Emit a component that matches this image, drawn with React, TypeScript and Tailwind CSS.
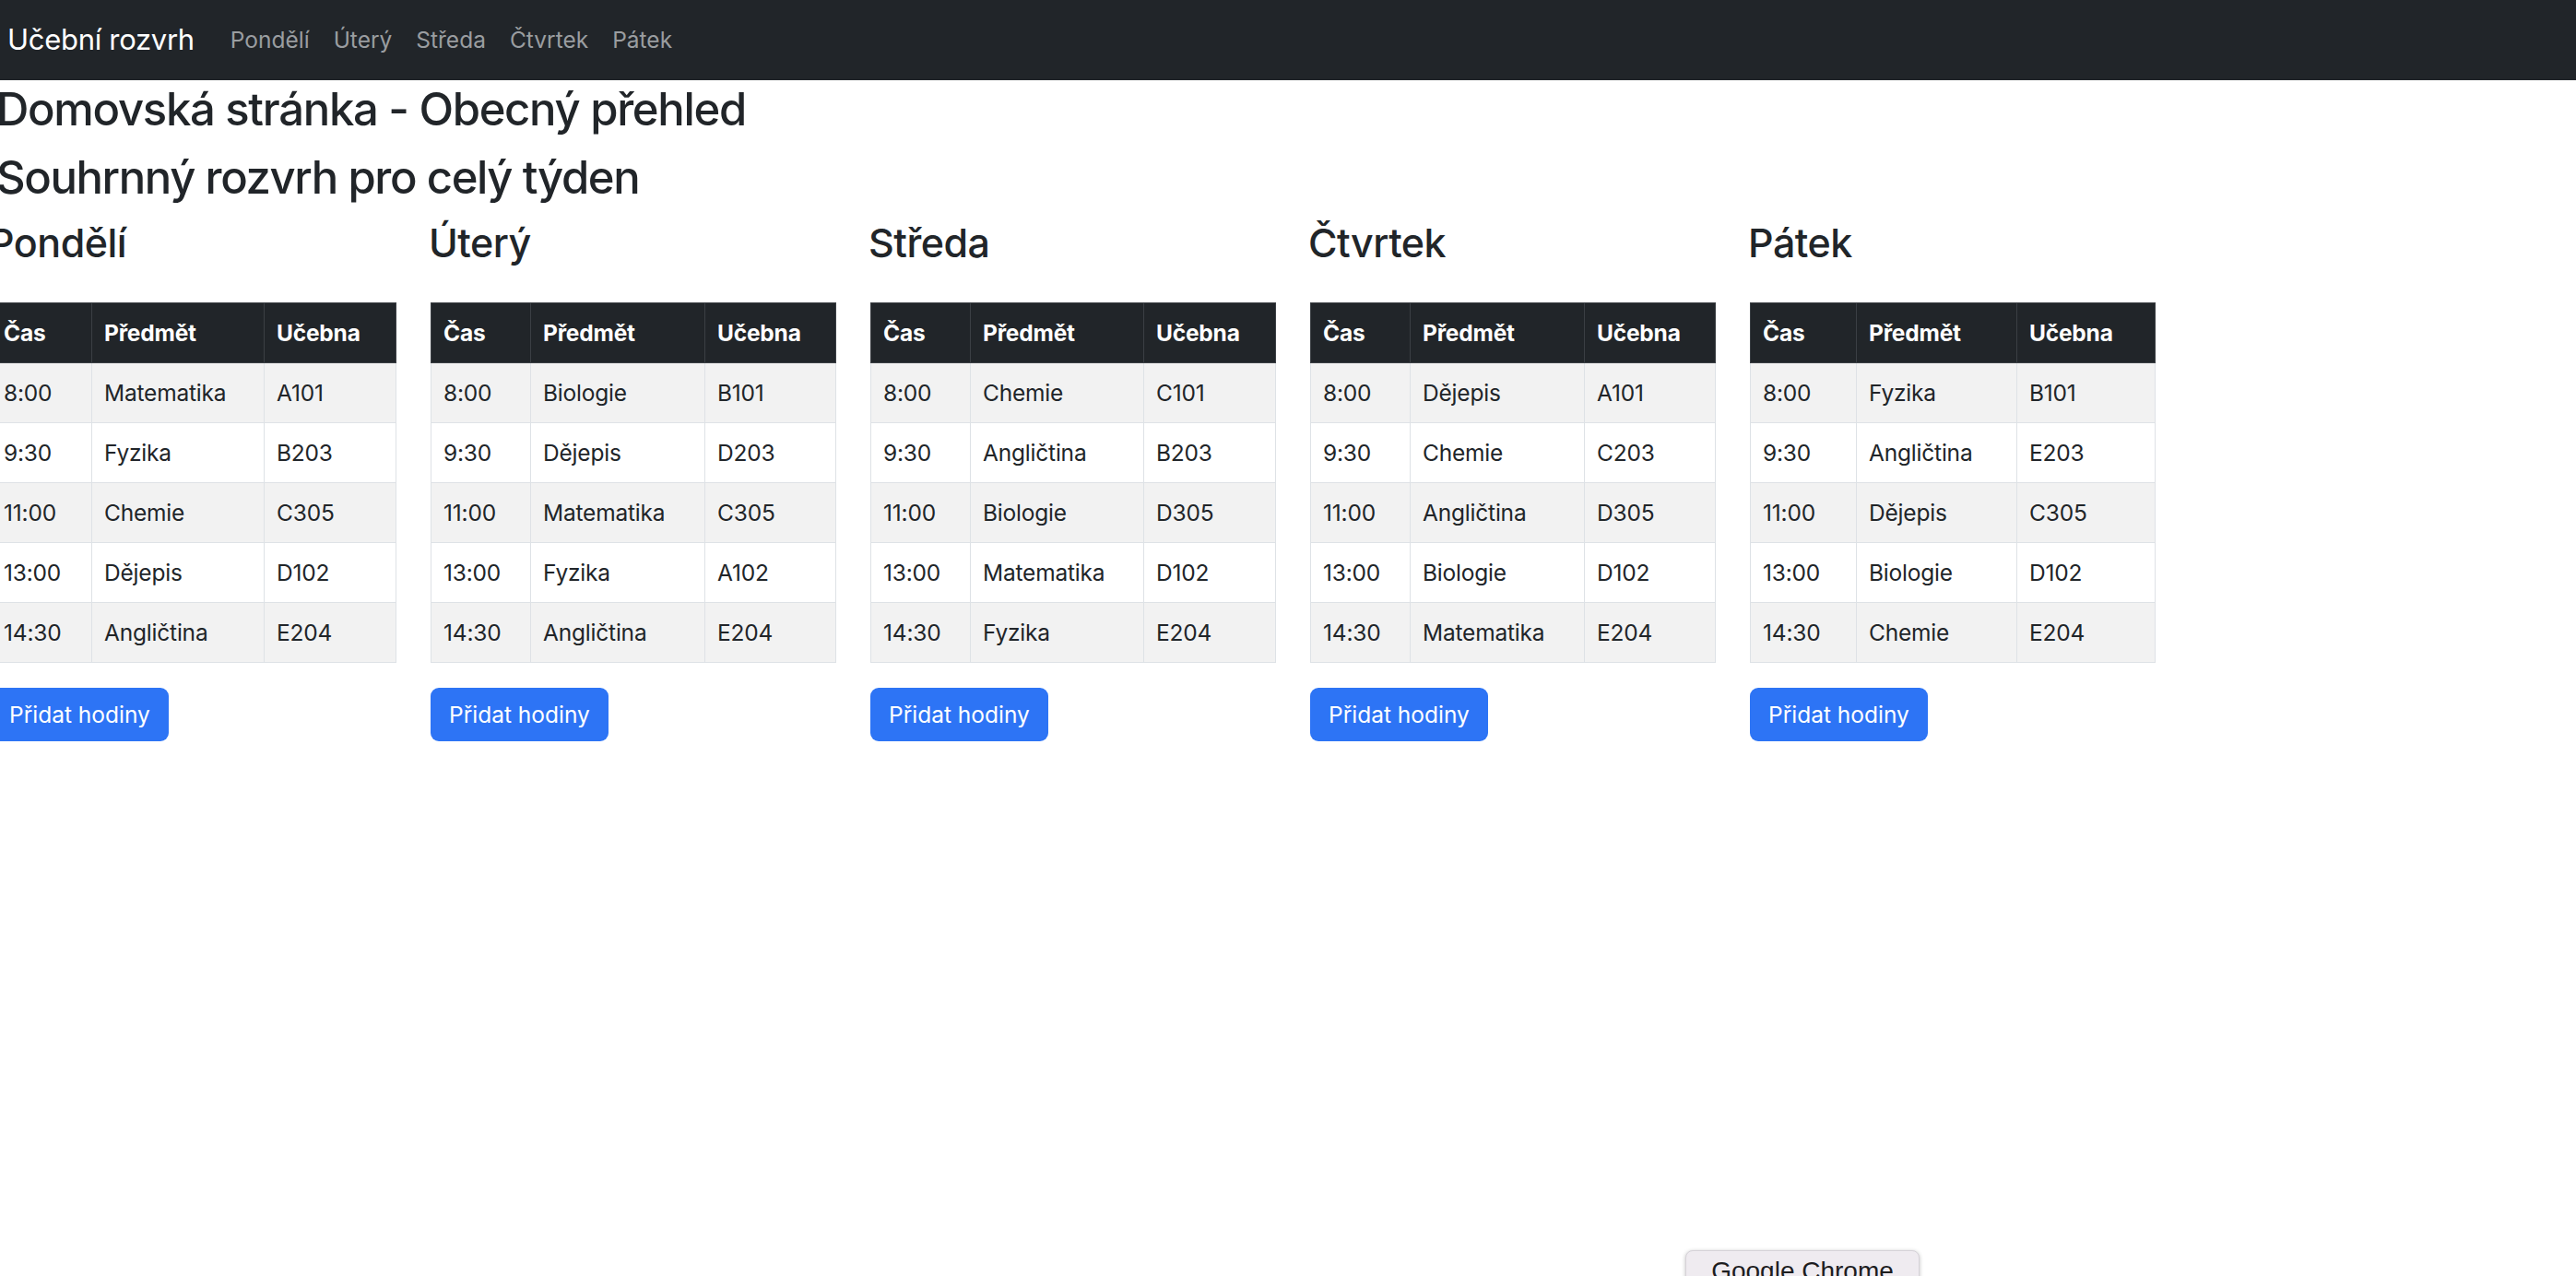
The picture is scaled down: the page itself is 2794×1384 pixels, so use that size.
import React from 'react';

interface Lesson {
  time: string;
  subject: string;
  room: string;
}

interface DaySchedule {
  name: string;
  cols: [number, number, number];
  lessons: Lesson[];
}

const days: DaySchedule[] = [
  {
    name: 'Pondělí',
    cols: [109, 187, 143],
    lessons: [
      { time: '8:00', subject: 'Matematika', room: 'A101' },
      { time: '9:30', subject: 'Fyzika', room: 'B203' },
      { time: '11:00', subject: 'Chemie', room: 'C305' },
      { time: '13:00', subject: 'Dějepis', room: 'D102' },
      { time: '14:30', subject: 'Angličtina', room: 'E204' },
    ],
  },
  {
    name: 'Úterý',
    cols: [108, 189, 142],
    lessons: [
      { time: '8:00', subject: 'Biologie', room: 'B101' },
      { time: '9:30', subject: 'Dějepis', room: 'D203' },
      { time: '11:00', subject: 'Matematika', room: 'C305' },
      { time: '13:00', subject: 'Fyzika', room: 'A102' },
      { time: '14:30', subject: 'Angličtina', room: 'E204' },
    ],
  },
  {
    name: 'Středa',
    cols: [108, 188, 143],
    lessons: [
      { time: '8:00', subject: 'Chemie', room: 'C101' },
      { time: '9:30', subject: 'Angličtina', room: 'B203' },
      { time: '11:00', subject: 'Biologie', room: 'D305' },
      { time: '13:00', subject: 'Matematika', room: 'D102' },
      { time: '14:30', subject: 'Fyzika', room: 'E204' },
    ],
  },
  {
    name: 'Čtvrtek',
    cols: [108, 189, 142],
    lessons: [
      { time: '8:00', subject: 'Dějepis', room: 'A101' },
      { time: '9:30', subject: 'Chemie', room: 'C203' },
      { time: '11:00', subject: 'Angličtina', room: 'D305' },
      { time: '13:00', subject: 'Biologie', room: 'D102' },
      { time: '14:30', subject: 'Matematika', room: 'E204' },
    ],
  },
  {
    name: 'Pátek',
    cols: [115, 174, 150],
    lessons: [
      { time: '8:00', subject: 'Fyzika', room: 'B101' },
      { time: '9:30', subject: 'Angličtina', room: 'E203' },
      { time: '11:00', subject: 'Dějepis', room: 'C305' },
      { time: '13:00', subject: 'Biologie', room: 'D102' },
      { time: '14:30', subject: 'Chemie', room: 'E204' },
    ],
  },
];

const navLinks = ['Pondělí', 'Úterý', 'Středa', 'Čtvrtek', 'Pátek'];

const DayColumn: React.FC<{ day: DaySchedule }> = ({ day }) => {
  return (
    <div className="w-[439px] shrink-0">
      <h3 className="ml-[-2px] mb-[39px] text-[43px] leading-[52px] font-medium tracking-[-0.5px] text-[#212529]">
        {day.name}
      </h3>

      <table className="w-[439px] table-fixed border-collapse text-[24.5px] tracking-[-0.2px] text-[#212529]">
        <colgroup>
          {day.cols.map((w, i) => (
            <col key={i} style={{ width: w }} />
          ))}
        </colgroup>
        <thead>
          <tr className="bg-[#212529] text-white">
            {['Čas', 'Předmět', 'Učebna'].map((h) => (
              <th
                key={h}
                className="h-[65px] border border-[#3b3f44] px-[13px] py-0 text-left font-bold align-middle"
              >
                {h}
              </th>
            ))}
          </tr>
        </thead>
        <tbody>
          {day.lessons.map((lesson, index) => (
            <tr key={index} className={index % 2 === 0 ? 'bg-[#f2f2f2]' : 'bg-white'}>
              <td className="h-[65px] border border-[#dee2e6] px-[13px] py-0 align-middle">{lesson.time}</td>
              <td className="h-[65px] border border-[#dee2e6] px-[13px] py-0 align-middle">{lesson.subject}</td>
              <td className="h-[65px] border border-[#dee2e6] px-[13px] py-0 align-middle">{lesson.room}</td>
            </tr>
          ))}
        </tbody>
      </table>

      <button className="mt-[27px] h-[58px] rounded-[9px] bg-[#2d74f5] px-[20px] text-[24.5px] leading-none text-white">
        Přidat hodiny
      </button>
    </div>
  );
};

export default function App() {
  return (
    <div className="relative h-[1384px] w-full overflow-hidden bg-white font-['Inter','Noto_Sans',sans-serif]">
      <nav className="flex h-[87px] items-center bg-[#212529] pl-[8px]">
        <span className="mr-[39px] text-[31px] tracking-[-0.3px] text-white">Učební rozvrh</span>
        <div className="flex items-center gap-[26px]">
          {navLinks.map((link) => (
            <span key={link} className="text-[24.5px] text-[#9a9da0]">
              {link}
            </span>
          ))}
        </div>
      </nav>

      <h1 className="ml-[-4px] mt-[2px] mb-[14px] text-[49px] leading-[60px] font-medium tracking-[-1.3px] text-[#212529]">
        Domovská stránka - Obecný přehled
      </h1>
      <h2 className="ml-[-4px] mb-[14px] text-[49px] leading-[60px] font-medium tracking-[-1.4px] text-[#212529]">
        Souhrnný rozvrh pro celý týden
      </h2>

      <div className="ml-[-10px] flex gap-[38px]">
        {days.map((day) => (
          <DayColumn key={day.name} day={day} />
        ))}
      </div>

      <div className="absolute left-[1828px] top-[1356px] h-[48px] w-[254px] rounded-[8px] border border-[#d6d2d8] bg-[#efebf0] pt-[8px] text-center shadow-[0_1px_4px_rgba(0,0,0,0.25)]">
        <span className="font-['Liberation_Sans',sans-serif] text-[28px] leading-none text-[#1d1d1f]">Google Chrome</span>
      </div>
    </div>
  );
}
